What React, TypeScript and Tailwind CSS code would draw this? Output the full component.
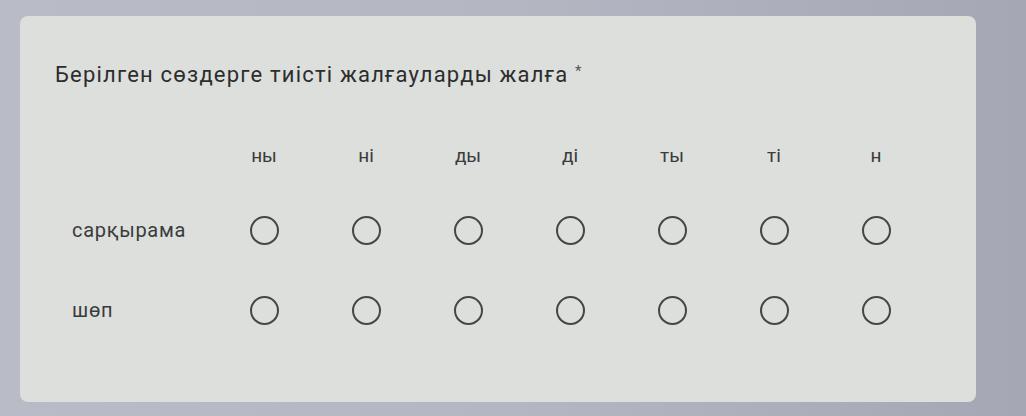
import React from "react";

const cols = ["ны", "ні", "ды", "ді", "ты", "ті", "н"];
const rows = ["сарқырама", "шөп"];

function Radio() {
  return <div className="w-[29px] h-[29px] rounded-full border-[2.5px] border-[#454647]" />;
}

export default function App() {
  return (
    <div
      className="w-[1026px] h-[416px] bg-gradient-to-r from-[#b9bbc6] via-[#b4b6c2] to-[#a5a7b5] pt-[16px] pl-[20px] overflow-hidden"
      style={{ fontFamily: "Roboto, 'Noto Sans', Arial, sans-serif" }}
    >
      <div className="w-[956px] h-[386px] rounded-[8px] bg-[#dcdfdb] pt-[41px] pl-[35px]">
        <div className="text-[22px] leading-[28px] text-[#2c2d2e] tracking-[1.2px]">
          Берілген сөздерге тиісті жалғауларды жалға{" "}
          <span className="text-[15px] align-[6px] text-[#555]">*</span>
        </div>
        <div className="mt-[52px] grid grid-cols-[158px_repeat(7,102px)] grid-rows-[49px_80px_80px] text-[#3a3b3c]">
          <div />
          {cols.map((c) => (
            <div key={c} className="flex justify-center text-[19px] leading-[30px]">
              {c}
            </div>
          ))}
          {rows.map((r) => (
            <React.Fragment key={r}>
              <div className="flex items-center pl-[17px] text-[20px] leading-[24px] tracking-[0.7px]">{r}</div>
              {cols.map((c) => (
                <div key={c} className="flex items-center justify-center">
                  <Radio />
                </div>
              ))}
            </React.Fragment>
          ))}
        </div>
      </div>
    </div>
  );
}
